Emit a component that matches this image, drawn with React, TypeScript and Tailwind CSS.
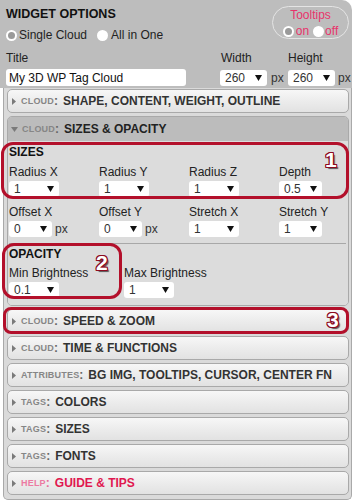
import type { ReactNode } from 'react'

const Arrow = () => (
  <svg width="7" height="6" viewBox="0 0 7 6" className="shrink-0">
    <path d="M0 0 H7 L3.5 6 Z" fill="#111" />
  </svg>
)

const Select = ({ value, w }: { value: string; w: number }) => (
  <div
    className="flex h-[16px] items-center justify-between rounded-[3px] bg-white pl-[5px] pr-[5px] text-[12px] leading-[14px] text-[#333]"
    style={{ width: w }}
  >
    <span>{value}</span>
    <Arrow />
  </div>
)

const Radio = ({ checked }: { checked?: boolean }) => (
  <span className="flex h-[11px] w-[11px] shrink-0 items-center justify-center rounded-full bg-white">
    {checked && <span className="h-[7px] w-[7px] rounded-full bg-[#9a9a9a]" />}
  </span>
)

const Field = ({
  label,
  value,
  w,
  px
}: {
  label: string
  value: string
  w: number
  px?: boolean
}) => (
  <div>
    <div className="text-[12px] leading-[14px] text-[#222]">{label}</div>
    <div className="mt-[2px] flex items-center gap-[3px]">
      <Select value={value} w={w} />
      {px && <span className="text-[12px] leading-[14px] text-[#333]">px</span>}
    </div>
  </div>
)

const Tri = ({ open }: { open?: boolean }) =>
  open ? (
    <svg width="7" height="5" viewBox="0 0 7 5" className="mr-[4px] shrink-0">
      <path d="M0 0 H7 L3.5 5 Z" fill="#7a7a7a" />
    </svg>
  ) : (
    <svg width="4" height="7" viewBox="0 0 4 7" className="mr-[5px] shrink-0">
      <path d="M0 0 L4 3.5 L0 7 Z" fill="#7a7a7a" />
    </svg>
  )

const HeaderText = ({
  prefix,
  children,
  help
}: {
  prefix: string
  children: ReactNode
  help?: boolean
}) => (
  <>
    <span
      className={`text-[9px] font-bold tracking-[0.2px] ${help ? 'text-[#ec7aa2]' : 'text-[#868686]'}`}
    >
      {prefix}
    </span>
    <span
      className={`mr-[5px] text-[12px] font-bold ${help ? 'text-[#e66f98]' : 'text-[#666]'}`}
    >
      :
    </span>
    <span
      className={`text-[12px] font-bold ${help ? 'text-[#e0174f]' : 'text-[#333]'}`}
    >
      {children}
    </span>
  </>
)

const Header = ({
  prefix,
  title,
  help
}: {
  prefix: string
  title: string
  help?: boolean
}) => (
  <div className="flex h-[24px] items-center rounded-[5px] border border-[#a9a9a9] bg-gradient-to-b from-[#f7f7f7] via-[#ececec] to-[#e2e2e2] pl-[4px] leading-[14px]">
    <Tri />
    <HeaderText prefix={prefix} help={help}>
      {title}
    </HeaderText>
  </div>
)

const Num = ({ n, className }: { n: string; className: string }) => (
  <span
    className={`absolute text-[21px] font-bold leading-[21px] text-white [text-shadow:1px_0_0_#8c0b1f,-1px_0_0_#8c0b1f,0_1px_0_#8c0b1f,0_-1px_0_#8c0b1f,1px_1px_0_#8c0b1f,-1px_-1px_0_#8c0b1f,1px_-1px_0_#8c0b1f,-1px_1px_0_#8c0b1f,2px_2px_1px_#555] ${className}`}
  >
    {n}
  </span>
)

export default function App() {
  return (
    <div className="relative h-[500px] w-[355px] bg-white font-['Liberation_Sans',Arial,sans-serif]">
      <div className="w-[352px]">
        {/* widget options */}
        <div className="h-[88px] rounded-tr-[10px] bg-[#bdbdbd] pl-[6px] pt-[6px]">
          <div className="flex justify-between">
            <div>
              <div className="text-[12.5px] font-bold leading-[16px] text-[#111]">
                WIDGET OPTIONS
              </div>
              <div className="mt-[6px] flex items-center text-[12px] leading-[14px] text-[#222]">
                <Radio checked />
                <span className="ml-[2px]">Single Cloud</span>
                <span className="ml-[10px]">
                  <Radio />
                </span>
                <span className="ml-[3px]">All in One</span>
              </div>
            </div>
            <div className="mr-[3px] flex h-[33px] w-[77px] flex-col items-center rounded-full border border-[#e4e4e4] pt-[1px] text-[12px] leading-[14px] text-[#e8336b]">
              <span>Tooltips</span>
              <div className="mt-[2px] flex items-center">
                <Radio checked />
                <span className="ml-[2px]">on</span>
                <span className="ml-[4px]">
                  <Radio />
                </span>
                <span className="ml-[1px]">off</span>
              </div>
            </div>
          </div>
          <div className="mt-[9px] flex">
            <div className="w-[180px]">
              <div className="text-[12px] leading-[14px] text-[#222]">Title</div>
              <div className="mt-[4px] flex h-[17px] items-center rounded-[3px] bg-white pl-[3px] text-[12px] text-[#111]">
                My 3D WP Tag Cloud
              </div>
            </div>
            <div className="ml-[34px] w-[68px]">
              <div className="pl-[1px] text-[12px] leading-[14px] text-[#222]">Width</div>
              <div className="mt-[5px] flex items-center gap-[4px]">
                <Select value="260" w={47} />
                <span className="text-[12px] leading-[14px] text-[#333]">px</span>
              </div>
            </div>
            <div>
              <div className="text-[12px] leading-[14px] text-[#222]">Height</div>
              <div className="mt-[5px] flex items-center gap-[3px]">
                <Select value="260" w={47} />
                <span className="text-[12px] leading-[14px] text-[#333]">px</span>
              </div>
            </div>
          </div>
        </div>

        {/* accordion */}
        <div className="ml-[3px] flex flex-col gap-[3px] rounded-b-[5px] border-x border-b border-[#a9a9a9] bg-[#dadada] pb-[4px] pl-[3px] pr-[2px] pt-[1px]">
          <Header prefix="CLOUD" title="SHAPE, CONTENT, WEIGHT, OUTLINE" />

          <div className="overflow-hidden rounded-[5px] border border-[#a9a9a9]">
            <div className="flex h-[24px] items-center bg-[#bcbcbc] pl-[3px] leading-[14px]">
              <Tri open />
              <HeaderText prefix="CLOUD">
                <span className="text-[#222]">SIZES &amp; OPACITY</span>
              </HeaderText>
            </div>
            <div className="bg-[#dcdcdc] pb-[7px] pl-[1px] pr-[1px] pt-[4px]">
              <div className="text-[12px] font-bold leading-[14px] text-[#111]">SIZES</div>
              <div className="mt-[6px] grid grid-cols-[90px_90px_90px_90px]">
                <Field label="Radius X" value="1" w={50} />
                <Field label="Radius Y" value="1" w={50} />
                <Field label="Radius Z" value="1" w={50} />
                <Field label="Depth" value="0.5" w={43} />
              </div>
              <div className="mt-[8px] grid grid-cols-[90px_90px_90px_90px]">
                <Field label="Offset X" value="0" w={43} px />
                <Field label="Offset Y" value="0" w={43} px />
                <Field label="Stretch X" value="1" w={50} />
                <Field label="Stretch Y" value="1" w={43} />
              </div>
              <div className="mr-[1px] mt-[6px] h-[1px] bg-[#a8a8a8]" />
              <div className="mt-[3px] text-[12px] font-bold leading-[14px] text-[#111]">
                OPACITY
              </div>
              <div className="mt-[5px] grid grid-cols-[115px_115px]">
                <Field label="Min Brightness" value="0.1" w={50} />
                <Field label="Max Brightness" value="1" w={50} />
              </div>
            </div>
          </div>

          <Header prefix="CLOUD" title="SPEED & ZOOM" />
          <Header prefix="CLOUD" title="TIME & FUNCTIONS" />
          <Header prefix="ATTRIBUTES" title="BG IMG, TOOLTIPS, CURSOR, CENTER FN" />
          <Header prefix="TAGS" title="COLORS" />
          <Header prefix="TAGS" title="SIZES" />
          <Header prefix="TAGS" title="FONTS" />
          <Header prefix="HELP" title="GUIDE & TIPS" help />
        </div>
      </div>

      {/* annotations */}
      <div className="absolute left-[1px] top-[142px] h-[57px] w-[348px] rounded-[12px] border-[3px] border-[#b3102b]" />
      <div className="absolute left-[2px] top-[243px] h-[56px] w-[120px] rounded-[12px] border-[3px] border-[#b3102b]" />
      <div className="absolute left-[3px] top-[307px] h-[27px] w-[346px] rounded-[8px] border-[3px] border-[#b3102b]" />
      <Num n="1" className="left-[325px] top-[149px]" />
      <Num n="2" className="left-[96px] top-[252px]" />
      <Num n="3" className="left-[327px] top-[309px]" />
    </div>
  )
}
